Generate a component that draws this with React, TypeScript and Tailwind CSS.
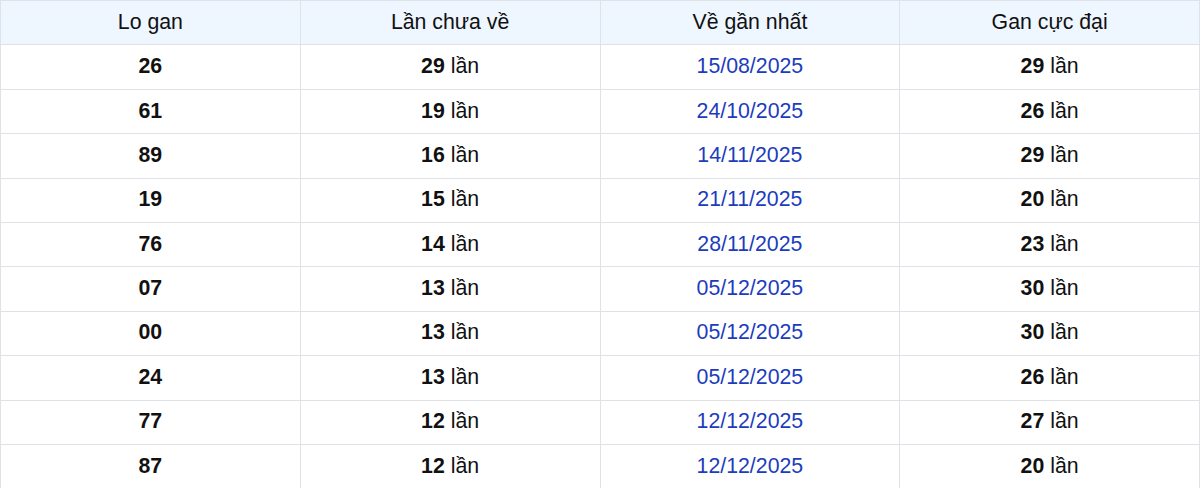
const rows = [
  { lo: "26", miss: 29, date: "15/08/2025", max: 29 },
  { lo: "61", miss: 19, date: "24/10/2025", max: 26 },
  { lo: "89", miss: 16, date: "14/11/2025", max: 29 },
  { lo: "19", miss: 15, date: "21/11/2025", max: 20 },
  { lo: "76", miss: 14, date: "28/11/2025", max: 23 },
  { lo: "07", miss: 13, date: "05/12/2025", max: 30 },
  { lo: "00", miss: 13, date: "05/12/2025", max: 30 },
  { lo: "24", miss: 13, date: "05/12/2025", max: 26 },
  { lo: "77", miss: 12, date: "12/12/2025", max: 27 },
  { lo: "87", miss: 12, date: "12/12/2025", max: 20 },
];

const headers = ["Lo gan", "Lần chưa về", "Về gần nhất", "Gan cực đại"];

export default function App() {
  return (
    <div className="w-[1200px] bg-white" style={{ fontFamily: "'Liberation Sans', Arial, sans-serif" }}>
      <table className="w-full table-fixed border-collapse text-[21.3px] text-[#111]">
        <thead>
          <tr className="h-[44.4px] bg-[#eef6ff]">
            {headers.map((h) => (
              <th key={h} className="border border-[#dfe3e8] font-normal text-center">
                {h}
              </th>
            ))}
          </tr>
        </thead>
        <tbody>
          {rows.map((r, i) => (
            <tr key={i} className="h-[44.4px]">
              <td className="border border-[#dfe3e8] text-center font-bold">{r.lo}</td>
              <td className="border border-[#dfe3e8] text-center">
                <b>{r.miss}</b> lần
              </td>
              <td className="border border-[#dfe3e8] text-center text-[#1c3cbd]">{r.date}</td>
              <td className="border border-[#dfe3e8] text-center">
                <b>{r.max}</b> lần
              </td>
            </tr>
          ))}
        </tbody>
      </table>
    </div>
  );
}
